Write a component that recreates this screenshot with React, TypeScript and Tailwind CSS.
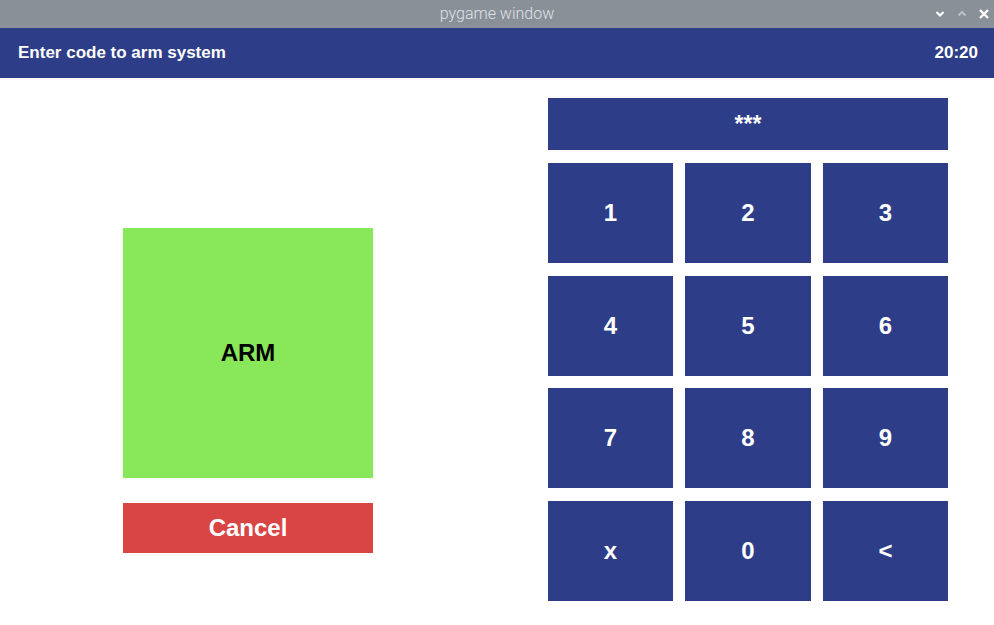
import React from "react";

const keys = ["1", "2", "3", "4", "5", "6", "7", "8", "9", "x", "0", "<"];

export default function App() {
  return (
    <div className="w-[994px] h-[625px] bg-white flex flex-col overflow-hidden" style={{ fontFamily: '"Liberation Sans", Arial, sans-serif' }}>
      <div className="h-[28px] bg-[#8a9098] relative flex items-center justify-center shrink-0">
        <span className="text-[16px] text-[#dfe2e5] font-light" style={{ fontFamily: 'Roboto, "Noto Sans", sans-serif' }}>pygame window</span>
        <div className="absolute right-[4px] top-0 h-full flex items-center gap-[10px]">
          <svg width="12" height="10" viewBox="0 0 12 10"><path d="M2.5 3 L6 6.5 L9.5 3" stroke="#ffffff" strokeWidth="2.2" fill="none" /></svg>
          <svg width="12" height="10" viewBox="0 0 12 10"><path d="M2.5 6.5 L6 3 L9.5 6.5" stroke="#b9bec4" strokeWidth="2.2" fill="none" /></svg>
          <svg width="12" height="12" viewBox="0 0 12 12"><path d="M2 2 L10 10 M10 2 L2 10" stroke="#ffffff" strokeWidth="2.4" fill="none" /></svg>
        </div>
      </div>
      <div className="h-[50px] bg-[#2e3d87] flex items-center justify-between px-[18px] pr-[16px] text-white font-bold text-[17px] shrink-0">
        <span>Enter code to arm system</span>
        <span>20:20</span>
      </div>
      <div className="flex flex-1">
        <div className="w-[548px] flex flex-col pl-[123px] pt-[150px]">
          <div className="w-[250px] h-[250px] bg-[#89e85a] flex items-center justify-center text-black font-bold text-[24px]">ARM</div>
          <div className="w-[250px] h-[50px] mt-[25px] bg-[#d94545] flex items-center justify-center text-white font-bold text-[24px]">Cancel</div>
        </div>
        <div className="w-[400px] pt-[20px] flex flex-col">
          <div className="h-[52px] bg-[#2e3d87] flex items-center justify-center text-white font-bold text-[23px]">***</div>
          <div className="mt-[13px] grid grid-cols-[125px_126px_125px] gap-x-[12px] gap-y-[12.5px]">
            {keys.map((k) => (
              <div key={k} className="h-[100px] bg-[#2e3d87] flex items-center justify-center text-white font-bold text-[24px]">{k}</div>
            ))}
          </div>
        </div>
      </div>
    </div>
  );
}
